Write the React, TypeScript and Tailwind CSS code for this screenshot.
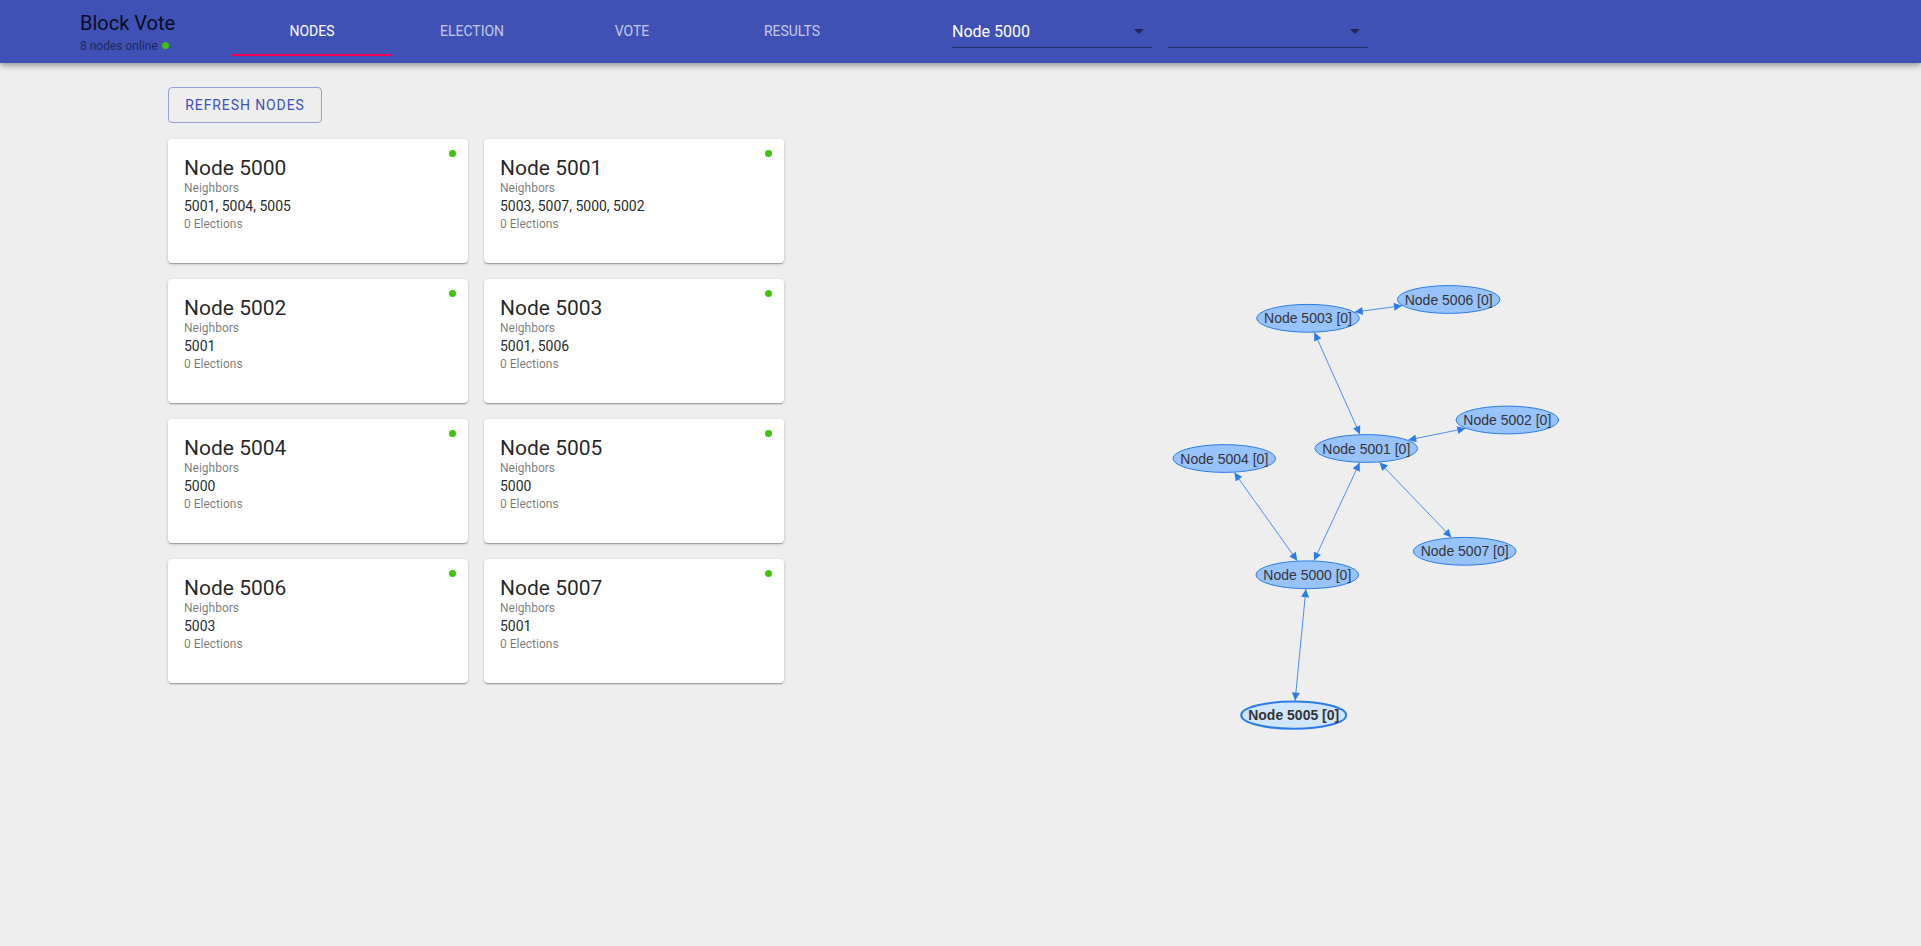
import React from "react";

const cards = [
  { id: 5000, n: "5001, 5004, 5005" },
  { id: 5001, n: "5003, 5007, 5000, 5002" },
  { id: 5002, n: "5001" },
  { id: 5003, n: "5001, 5006" },
  { id: 5004, n: "5000" },
  { id: 5005, n: "5000" },
  { id: 5006, n: "5003" },
  { id: 5007, n: "5001" },
];

const OX = 784;
const OY = 63;

const nodes: Record<number, [number, number]> = {
  5006: [1448.7, 299.5],
  5003: [1308, 318.3],
  5002: [1507.3, 420],
  5001: [1366.3, 448.5],
  5004: [1224.3, 458.5],
  5007: [1464.7, 551.3],
  5000: [1307.3, 574.8],
  5005: [1293.7, 715.2],
};

const edges: [number, number][] = [
  [5003, 5006],
  [5003, 5001],
  [5001, 5002],
  [5004, 5000],
  [5001, 5000],
  [5001, 5007],
  [5000, 5005],
];

function radii(id: number): [number, number] {
  return id === 5005 ? [53.5, 14.6] : [51.8, 14.4];
}

function boundary(from: number, to: number): [number, number] {
  const [cx, cy] = nodes[from];
  const [tx, ty] = nodes[to];
  const dx = tx - cx;
  const dy = ty - cy;
  const len = Math.hypot(dx, dy);
  const ux = dx / len;
  const uy = dy / len;
  const [rx, ry] = radii(from);
  const r = 1 / Math.sqrt((ux / rx) ** 2 + (uy / ry) ** 2);
  return [cx + ux * r - OX, cy + uy * r - OY];
}

function Graph() {
  return (
    <svg width={1137} height={883} viewBox="0 0 1137 883" className="block">
      <defs>
        <marker
          id="arr"
          viewBox="0 0 10 10"
          refX="10"
          refY="5"
          markerWidth="10"
          markerHeight="8"
          markerUnits="userSpaceOnUse"
          orient="auto-start-reverse"
        >
          <path d="M0,0 L10,5 L0,10 z" fill="#2b7ce9" />
        </marker>
      </defs>
      {edges.map(([a, b]) => {
        const [x1, y1] = boundary(a, b);
        const [x2, y2] = boundary(b, a);
        return (
          <line
            key={`${a}-${b}`}
            x1={x1}
            y1={y1}
            x2={x2}
            y2={y2}
            stroke="#4b8ff0"
            strokeWidth={1}
            markerStart="url(#arr)"
            markerEnd="url(#arr)"
          />
        );
      })}
      {Object.entries(nodes).map(([id, [x, y]]) => {
        const sel = id === "5005";
        const [rx, ry] = radii(Number(id));
        return (
          <g key={id}>
            <ellipse
              cx={x - OX}
              cy={y - OY}
              rx={sel ? rx - 1 : rx - 0.5}
              ry={sel ? ry - 1 : ry - 0.5}
              fill={sel ? "#d2e5ff" : "#97c2fc"}
              stroke="#2b7ce9"
              strokeWidth={sel ? 2 : 1}
            />
            <text
              x={x - OX}
              y={y - OY + 5}
              textAnchor="middle"
              fontSize={14}
              fontWeight={sel ? 700 : 400}
              fill="#343434"
              style={{ fontFamily: '"Liberation Sans", Arial, sans-serif' }}
            >
              {`Node ${id} [0]`}
            </text>
          </g>
        );
      })}
    </svg>
  );
}

function Select({ value }: { value: string }) {
  return (
    <div className="relative w-[200px] border-b border-[rgba(0,0,0,0.42)] pt-[6px] pb-[6px]">
      <div className="h-[19px] text-[16px] leading-[19px] text-white">{value}</div>
      <svg
        className="absolute right-[8px] top-[13px]"
        width="10"
        height="5"
        viewBox="0 0 10 5"
      >
        <path d="M0,0 L10,0 L5,5 z" fill="rgba(0,0,0,0.54)" />
      </svg>
    </div>
  );
}

export default function App() {
  const tabs = ["NODES", "ELECTION", "VOTE", "RESULTS"];
  return (
    <div
      className="min-h-[946px] bg-[#eeeeee]"
      style={{ fontFamily: 'Roboto, "Liberation Sans", Arial, sans-serif' }}
    >
      <header className="relative z-10 flex h-[63px] items-center bg-[#3f51b5] pl-[80px] shadow-[0px_2px_4px_-1px_rgba(0,0,0,0.2),0px_4px_5px_0px_rgba(0,0,0,0.14),0px_1px_10px_0px_rgba(0,0,0,0.12)]">
        <div className="w-[152px] pt-[1px]">
          <div className="text-[20px] leading-[24px] text-[rgba(0,0,0,0.87)]">Block Vote</div>
          <div className="mt-[3px] flex items-center text-[12px] leading-[16px] text-[rgba(0,0,0,0.54)]">
            8 nodes online
            <span className="ml-[4px] inline-block h-[7px] w-[7px] rounded-full bg-[#41c10f]" />
          </div>
        </div>
        <nav className="flex h-[48px]">
          {tabs.map((t, i) => (
            <div
              key={t}
              className={`relative flex w-[160px] items-center justify-center text-[14px] font-normal ${
                i === 0 ? "text-white" : "text-[rgba(255,255,255,0.7)]"
              }`}
            >
              {t}
              {i === 0 && (
                <span className="absolute bottom-0 left-0 h-[2px] w-full bg-[#f50057]" />
              )}
            </div>
          ))}
        </nav>
        <div className="ml-[80px] flex gap-[16px]">
          <Select value="Node 5000" />
          <Select value="" />
        </div>
      </header>

      <main className="flex">
        <div className="ml-[168px] w-[616px] pt-[24px]">
          <button className="flex h-[36px] w-[154px] items-center justify-center rounded-[4px] border border-[rgba(63,81,181,0.5)] text-[14px] font-normal tracking-[0.9px] text-[#3f51b5]">
            REFRESH NODES
          </button>
          <div className="mt-[16px] grid grid-cols-[300px_300px] gap-x-[16px] gap-y-[16px]">
            {cards.map((c) => (
              <div
                key={c.id}
                className="relative h-[124px] rounded-[4px] bg-white px-[16px] pt-[17px] shadow-[0px_1px_3px_0px_rgba(0,0,0,0.2),0px_1px_1px_0px_rgba(0,0,0,0.14),0px_2px_1px_-1px_rgba(0,0,0,0.12)]"
              >
                <span className="absolute right-[12px] top-[11px] h-[7px] w-[7px] rounded-full bg-[#41c10f]" />
                <div className="text-[21px] leading-[24px] text-[rgba(0,0,0,0.87)]">
                  Node {c.id}
                </div>
                <div className="text-[12px] leading-[16px] text-[rgba(0,0,0,0.54)]">Neighbors</div>
                <div className="text-[14px] leading-[20px] text-[rgba(0,0,0,0.87)]">{c.n}</div>
                <div className="text-[12px] leading-[16px] text-[rgba(0,0,0,0.54)]">0 Elections</div>
              </div>
            ))}
          </div>
        </div>
        <div className="flex-1">
          <Graph />
        </div>
      </main>
    </div>
  );
}
